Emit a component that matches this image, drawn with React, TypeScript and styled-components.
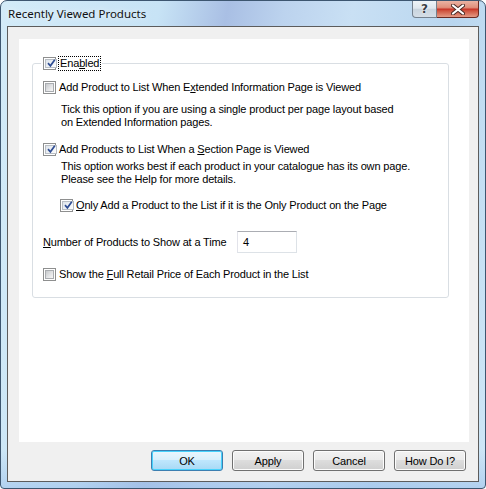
import React from 'react';
import styled, {createGlobalStyle} from 'styled-components';

const GlobalStyle = createGlobalStyle`
  html, body {
    margin: 0;
    padding: 0;
    background: #fff;
  }
  body {
    font-family: "Liberation Sans", Arial, sans-serif;
    font-size: 11px;
    letter-spacing: -0.15px;
    color: #000;
  }
`;

const Window = styled.div`
  width: 486px;
  height: 489px;
  box-sizing: border-box;
  border: 1px solid #3d5670;
  border-radius: 7px 7px 4px 4px;
  display: flex;
  flex-direction: column;
  overflow: hidden;
  background:
    linear-gradient(180deg, rgba(255,255,255,0) 0%, rgba(255,255,255,0) 92%, rgba(160,195,235,0.6) 100%),
    linear-gradient(100deg, #d3ebf8 0%, #c7e3f5 28%, #a9bfe4 40%, #bcd3ee 50%, #c9e0f4 62%, #b9d6ef 80%, #cfe7f7 100%);
`;

const TitleBar = styled.div`
  height: 25px;
  display: flex;
  align-items: flex-start;
  padding: 0 6px 0 7px;
  flex-shrink: 0;
`;

const Title = styled.div`
  font-family: "Noto Sans", "Liberation Sans", sans-serif;
  font-size: 11.5px;
  letter-spacing: 0;
  line-height: 16px;
  margin-top: 5px;
  color: #111;
  flex: 1;
  text-shadow: 0 0 6px rgba(255,255,255,0.9);
`;

const CaptionButtons = styled.div`
  display: flex;
  height: 17px;
`;

const CaptionButton = styled.div<{$close?: boolean}>`
  box-sizing: border-box;
  height: 17px;
  width: ${p => (p.$close ? '42px' : '25px')};
  display: flex;
  align-items: center;
  justify-content: center;
  border: 1px solid ${p => (p.$close ? '#6b2a22' : '#75818e')};
  border-top: none;
  border-left-width: ${p => (p.$close ? '0' : '1px')};
  border-radius: ${p => (p.$close ? '0 0 4px 0' : '0 0 0 4px')};
  background: ${p =>
    p.$close
      ? 'linear-gradient(180deg, #eab3a3 0%, #e0907c 40%, #c8372a 52%, #cf5540 62%, #e49a85 100%)'
      : 'linear-gradient(180deg, #eef3f7 0%, #dfe7ee 45%, #c9d4de 52%, #d5dee7 100%)'};
  color: #3a3f45;
  font-family: "DejaVu Sans", sans-serif;
  font-size: 12px;
  font-weight: bold;
  text-shadow: 0 0 2px #fff, 0 0 1px #fff;
`;

const Client = styled.div`
  margin: 0 6px 0 6px;
  height: 456px;
  box-sizing: border-box;
  border: 1px solid #5c5c5c;
  background: #f0f0f0;
  display: flex;
  flex-direction: column;
  padding: 12px 9px 0 11px;
`;

const Panel = styled.div`
  height: 403px;
  background: #fff;
  padding: 17px 20px 0 13px;
  box-sizing: border-box;
`;

const Group = styled.fieldset`
  margin: 0;
  padding: 0 10px 16px 10px;
  border: 1px solid #d9dee3;
  border-radius: 3px;
  min-width: 0;
  display: flex;
  flex-direction: column;
`;

const Legend = styled.legend`
  padding: 0 2px;
  margin-left: -2px;
  height: 14px;
  display: flex;
  align-items: center;
`;

const Row = styled.div<{$top?: number; $indent?: number}>`
  display: flex;
  align-items: center;
  height: 13px;
  margin-top: ${p => p.$top ?? 0}px;
  margin-left: ${p => p.$indent ?? 0}px;
`;

const Label = styled.span<{$focus?: boolean}>`
  margin-left: 3px;
  line-height: 13px;
  white-space: nowrap;
  ${p => (p.$focus ? 'outline: 1px dotted #000; outline-offset: 0px; padding: 0 1px;' : '')}
`;

const Desc = styled.div<{$top?: number}>`
  margin-top: ${p => p.$top ?? 0}px;
  margin-left: 18px;
  line-height: 13px;
`;

const BoxOuter = styled.span`
  width: 13px;
  height: 13px;
  box-sizing: border-box;
  border: 1px solid #8e8f8f;
  background: #fff;
  padding: 1px;
  display: inline-flex;
  flex-shrink: 0;
`;

const BoxInner = styled.span<{$checked?: boolean}>`
  flex: 1;
  box-sizing: border-box;
  border: 1px solid ${p => (p.$checked ? '#b9bec4' : '#a9acb0')};
  background: ${p =>
    p.$checked
      ? 'linear-gradient(135deg, #dde3ea 0%, #f1f4f7 60%, #fdfdfd 100%)'
      : 'linear-gradient(135deg, #c6c9cc 0%, #e3e4e6 55%, #f7f7f7 100%)'};
  display: flex;
  align-items: center;
  justify-content: center;
`;

const CheckBox = ({checked}: {checked?: boolean}) => (
  <BoxOuter>
    <BoxInner $checked={checked}>
      {checked && (
        <svg width="9" height="9" viewBox="0 0 9 9" style={{marginLeft: 1}}>
          <path d="M1 4.2 L3.4 6.8 L7.8 0.8" fill="none" stroke="#2f4d93" strokeWidth="1.7" />
        </svg>
      )}
    </BoxInner>
  </BoxOuter>
);

const NumberRow = styled.div`
  display: flex;
  align-items: center;
  margin-top: 19px;
  height: 22px;
`;

const NumberLabel = styled.span`
  width: 194px;
  line-height: 13px;
`;

const TextBox = styled.div`
  width: 60px;
  height: 22px;
  box-sizing: border-box;
  border: 1px solid #dde2e7;
  border-top-color: #abadb3;
  border-left-color: #e2e3ea;
  background: #fff;
  padding: 3px 5px;
  line-height: 14px;
`;

const ButtonBar = styled.div`
  display: flex;
  justify-content: flex-end;
  gap: 9px;
  margin-top: 8px;
  padding-right: 3px;
`;

const Button = styled.div<{$default?: boolean}>`
  width: 72px;
  height: 21px;
  box-sizing: border-box;
  border: 1px solid ${p => (p.$default ? '#3c7fb1' : '#707070')};
  border-radius: 3px;
  display: flex;
  align-items: center;
  justify-content: center;
  box-shadow: inset 0 0 0 1px ${p => (p.$default ? '#48d2fc' : '#fcfcfc')};
  background: ${p =>
    p.$default
      ? 'linear-gradient(180deg, #eaf6fd 0%, #d9f0fc 45%, #bee6fd 50%, #a7d9f5 100%)'
      : 'linear-gradient(180deg, #f2f2f2 0%, #ebebeb 45%, #dddddd 50%, #cfcfcf 100%)'};
`;

const Caption = () => (
  <TitleBar>
    <Title>Recently Viewed Products</Title>
    <CaptionButtons>
      <CaptionButton>?</CaptionButton>
      <CaptionButton $close>
        <svg width="14" height="11" viewBox="0 0 14 11">
          <path d="M2 1.5 L12 9.5 M12 1.5 L2 9.5" stroke="#4a2a25" strokeWidth="4" strokeLinecap="round" />
          <path d="M2 1.5 L12 9.5 M12 1.5 L2 9.5" stroke="#fff" strokeWidth="2.2" strokeLinecap="round" />
        </svg>
      </CaptionButton>
    </CaptionButtons>
  </TitleBar>
);

export default function App() {
  return (
    <>
      <GlobalStyle />
      <Window>
        <Caption />
        <Client>
          <Panel>
            <Group>
              <Legend>
                <CheckBox checked />
                <Label $focus>
                  Ena<u>b</u>led
                </Label>
              </Legend>
              <Row $top={11}>
                <CheckBox />
                <Label>
                  Add Product to List When E<u>x</u>tended Information Page is Viewed
                </Label>
              </Row>
              <Desc $top={9}>
                Tick this option if you are using a single product per page layout based
                <br />
                on Extended Information pages.
              </Desc>
              <Row $top={14}>
                <CheckBox checked />
                <Label>
                  Add Products to List When a <u>S</u>ection Page is Viewed
                </Label>
              </Row>
              <Desc $top={4}>
                This option works best if each product in your catalogue has its own page.
                <br />
                Please see the Help for more details.
              </Desc>
              <Row $top={13} $indent={17}>
                <CheckBox checked />
                <Label>
                  <u>O</u>nly Add a Product to the List if it is the Only Product on the Page
                </Label>
              </Row>
              <NumberRow>
                <NumberLabel>
                  <u>N</u>umber of Products to Show at a Time
                </NumberLabel>
                <TextBox>4</TextBox>
              </NumberRow>
              <Row $top={15}>
                <CheckBox />
                <Label>
                  Show the <u>F</u>ull Retail Price of Each Product in the List
                </Label>
              </Row>
            </Group>
          </Panel>
          <ButtonBar>
            <Button $default>OK</Button>
            <Button>Apply</Button>
            <Button>Cancel</Button>
            <Button>How Do I?</Button>
          </ButtonBar>
        </Client>
      </Window>
    </>
  );
}
